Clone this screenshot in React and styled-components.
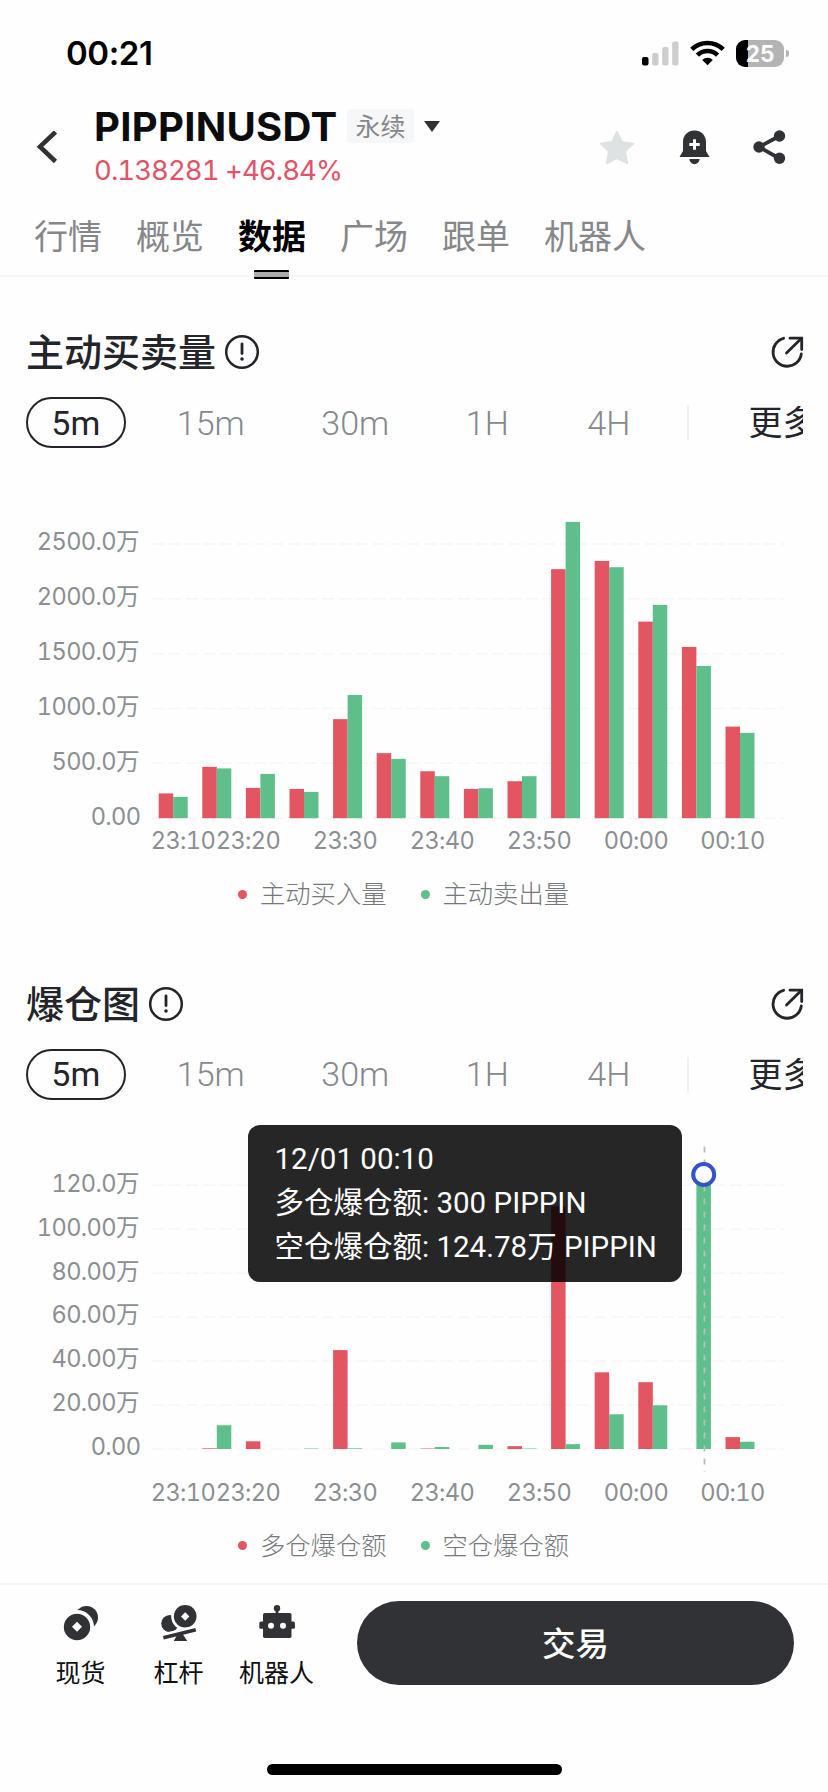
import React from 'react'
import styled, { createGlobalStyle } from 'styled-components'

const GlobalStyle = createGlobalStyle`
  * {
    box-sizing: border-box;
  }
  body {
    margin: 0;
    background: #fefefe;
    font-family: Inter, "Noto Sans CJK SC", sans-serif;
  }
`

const RED = '#e35561'
const GREEN = '#5ebf8b'
const DARK = '#303236'

const Screen = styled.div`
  display: flex;
  flex-direction: column;
  width: 828px;
  height: 1792px;
  background: #fefefe;
  overflow: hidden;
`

const StatusBar = styled.div`
  display: flex;
  justify-content: space-between;
  align-items: center;
  height: 106px;
  padding: 0 38px 0 66px;
`

const Clock = styled.span`
  font-size: 33px;
  font-weight: 600;
  letter-spacing: -0.4px;
  color: #000;
`

const StatusIcons = styled.div`
  display: flex;
  align-items: center;
  gap: 11px;
`

const Battery = styled.div`
  position: relative;
  display: flex;
  align-items: center;
  justify-content: center;
  width: 48px;
  height: 27px;
  border-radius: 9px;
  background: linear-gradient(to right, #000 12px, #b4b4b4 12px);
  color: #fff;
  font-size: 22.5px;
  font-weight: 700;
  line-height: 27px;
  margin-right: 6px;

  &:after {
    content: "";
    position: absolute;
    right: -5px;
    top: 10px;
    width: 3px;
    height: 7px;
    border-radius: 0 3px 3px 0;
    background: #b4b4b4;
  }
`

const Header = styled.header`
  display: flex;
  align-items: center;
  height: 84px;
  padding: 0 42px 0 36px;
`

const Pair = styled.div`
  flex: 1;
  margin: 0 0 3px 36px;
`

const PairTop = styled.div`
  display: flex;
  align-items: center;
  height: 42px;
`

const Symbol = styled.h1`
  margin: 0;
  width: 253px;
  font-size: 40px;
  font-weight: 700;
  line-height: 42px;
  letter-spacing: 0.3px;
  color: #0b0c0d;
`

const Tag = styled.span`
  display: flex;
  align-items: center;
  justify-content: center;
  width: 67px;
  height: 34px;
  margin: -2px 10px 0 0;
  padding-bottom: 2px;
  background: #f6f7f8;
  color: #85888c;
  font-size: 25px;
  border-radius: 3px;
`

const Price = styled.div`
  font-size: 27.5px;
  line-height: 40px;
  height: 40px;
  padding-top: 2px;
  letter-spacing: -0.95px;
  color: #df5468;
  font-feature-settings: "tnum";
  white-space: nowrap;
`

const HeaderActions = styled.div`
  display: flex;
  align-items: center;
  gap: 43.5px;
  margin-bottom: 2px;
`

const Tabs = styled.nav`
  display: flex;
  align-items: center;
  gap: 34px;
  height: 87px;
  padding: 8px 34px 0;
  border-bottom: 2px solid #f6f6f7;
`

const Tab = styled.a`
  position: relative;
  font-size: 34px;
  line-height: 48px;
  font-weight: ${(p) => (p.$active ? 700 : 400)};
  color: ${(p) => (p.$active ? '#000' : '#85878a')};

  &:after {
    content: "";
    display: ${(p) => (p.$active ? 'block' : 'none')};
    position: absolute;
    left: 16px;
    bottom: -18px;
    width: 35px;
    height: 5px;
    border-top: 2px solid #000;
    border-bottom: 2px solid #000;
    border-radius: 1px;
    background: #a9abac;
  }
`

const Section = styled.section`
  flex: none;
  height: 651.5px;
  padding-top: 50px;
`

const SectionHead = styled.div`
  display: flex;
  align-items: center;
  height: 50px;
  padding: 0 24px 0 26px;
`

const SectionTitle = styled.h2`
  margin: 0 8px 0 0;
  font-size: 38px;
  font-weight: 500;
  line-height: 50px;
  color: #23252a;
`

const Spacer = styled.div`
  flex: 1;
`

const Ranges = styled.div`
  display: flex;
  align-items: center;
  gap: 26px;
  height: 51px;
  margin: 20px 25px 0 26px;
  overflow: hidden;
  font-family: Roboto, "Noto Sans CJK SC", sans-serif;
`

const Range = styled.button`
  flex: none;
  height: 51px;
  padding: 0 23.3px;
  border: 2px solid ${(p) => (p.$active ? '#23252a' : 'transparent')};
  border-radius: 26px;
  background: none;
  font: inherit;
  font-size: 34px;
  font-weight: ${(p) => (p.$active ? 400 : 350)};
  line-height: 46px;
  color: ${(p) => (p.$active ? '#23252a' : '#85888d')};

  &:last-of-type {
    margin-left: 2px;
  }
`

const Divider = styled.span`
  flex: none;
  width: 2px;
  height: 35px;
  margin: 0 34px 0 5px;
  background: #f0f0f1;
`

const More = styled.span`
  flex: none;
  padding-top: 1px;
  font-size: 34px;
  line-height: 50px;
  color: #23252a;
`

const ChartBox = styled.div`
  position: relative;
  height: 418px;

  svg {
    display: block;
  }
`

const AxisText = styled.text`
  font-family: Inter, "Noto Sans CJK SC", sans-serif;
  font-size: 23.6px;
  font-weight: 400;
  letter-spacing: -0.6px;
  font-feature-settings: "tnum";
  fill: #8b8e93;
`

const Tooltip = styled.div`
  position: absolute;
  left: 247.5px;
  top: 25.5px;
  width: 434.5px;
  height: 157px;
  padding: 12px 27px;
  border-radius: 12px;
  background: rgba(0, 0, 0, 0.85);
  color: #fff;
  font-family: Roboto, "Noto Sans CJK SC", sans-serif;
  font-size: 29.5px;
  line-height: 44px;
  white-space: nowrap;

  div {
    height: 44px;
  }
`

const Legend = styled.div`
  display: flex;
  align-items: center;
  gap: 34px;
  height: 56px;
  padding-left: 238px;
`

const LegendItem = styled.span`
  display: flex;
  align-items: center;
  font-size: 25.3px;
  line-height: 36px;
  font-weight: 300;
  color: #75787d;

  &:before {
    content: "";
    width: 9px;
    height: 9px;
    margin-right: 13px;
    border-radius: 50%;
    background: ${(p) => p.$color};
  }
`

const BottomBar = styled.footer`
  display: flex;
  flex: none;
  height: 120px;
  margin-top: 3px;
  padding: 16px 34px 0 31.5px;
  border-top: 2px solid #f6f6f7;
`

const NavItem = styled.div`
  display: flex;
  flex-direction: column;
  align-items: center;
  width: 98px;
  font-size: 25px;
  line-height: 36px;
  color: #0f1011;
  white-space: nowrap;

  svg {
    margin: 4px 0 14px;
  }
`

const TradeButton = styled.button`
  width: 437px;
  height: 84px;
  margin-left: auto;
  padding: 0 0 3px;
  border: 0;
  border-radius: 42px;
  background: ${DARK};
  color: #fff;
  font-family: inherit;
  font-size: 33.5px;
  font-weight: 500;
`

const HomeIndicator = styled.div`
  flex: none;
  width: 295px;
  height: 11px;
  margin: 60.5px auto 0;
  border-radius: 6px;
  background: #000;
`

/* ---- icons ---- */

const SignalIcon = () => (
  <svg width="37" height="25" viewBox="0 0 37 25">
    <rect x="0" y="16" width="6.5" height="8.5" rx="2" fill="#000" />
    <rect x="10.2" y="12" width="6.3" height="12.5" rx="2" fill="#cdcdcd" />
    <rect x="20.2" y="6" width="6.3" height="18.5" rx="2" fill="#cdcdcd" />
    <rect x="30.2" y="0.5" width="6.3" height="24" rx="2" fill="#cdcdcd" />
  </svg>
)

const WifiIcon = () => (
  <svg width="35" height="26" viewBox="0 0 35 26">
    <g fill="none" stroke="#000" strokeWidth="4.6">
      <path d="M1.8 9.4a22.4 22.4 0 0 1 31.4 0" />
      <path d="M7.4 15.1a14.4 14.4 0 0 1 20.2 0" />
    </g>
    <path d="M17.5 25.2l-5.3-5.2a7.5 7.5 0 0 1 10.6 0z" fill="#000" />
  </svg>
)

const BackIcon = () => (
  <svg width="22" height="34" viewBox="0 0 22 34">
    <path d="M19.5 1L4 15.7l15.5 14.8" fill="none" stroke={DARK} strokeWidth="4.6" />
  </svg>
)

const StarIcon = () => (
  <svg width="36" height="35" viewBox="0 0 36 35">
    <path
      d="M18 1.5l5 10.4 11.6 1.6-8.4 8 2.2 12L18 28.4 7.6 33.5l2.2-12-8.4-8L13 11.9z"
      fill="#dfe2e3"
      stroke="#dfe2e3"
      strokeWidth="1.6"
      strokeLinejoin="round"
    />
  </svg>
)

const BellIcon = () => (
  <svg width="31" height="35" viewBox="0 0 31 35">
    <path d="M15.5 0.5C22.3 0.5 27 5.4 27 12v9l3.5 6H0.5L4 21v-9C4 5.4 8.7 0.5 15.5 0.5z" fill={DARK} />
    <path d="M15.5 9.3v10.4M10.3 14.5h10.4" stroke="#fff" strokeWidth="3" />
    <path d="M10.3 29h10.4c-.5 3.3-2.5 5.2-5.2 5.2s-4.7-1.9-5.2-5.2z" fill={DARK} />
  </svg>
)

const ShareIcon = () => (
  <svg width="33" height="35" viewBox="0 0 33 35">
    <path d="M26.5 6L6 17l20.5 11.5" fill="none" stroke={DARK} strokeWidth="3.8" />
    <circle cx="26.5" cy="6" r="5.7" fill={DARK} />
    <circle cx="6" cy="17" r="5.7" fill={DARK} />
    <circle cx="26.5" cy="28.3" r="5.7" fill={DARK} />
  </svg>
)

const InfoIcon = () => (
  <svg width="36" height="36" viewBox="0 0 36 36">
    <circle cx="18" cy="18" r="15.8" fill="none" stroke="#23252a" strokeWidth="2.5" />
    <path d="M18 10v9.5" stroke="#23252a" strokeWidth="2.8" strokeLinecap="round" />
    <circle cx="18" cy="25" r="1.8" fill="#23252a" />
  </svg>
)

const ExpandIcon = () => (
  <svg width="34" height="34" viewBox="0 0 34 34" fill="none" stroke="#23252a" strokeWidth="2.8" strokeLinecap="round">
    <path d="M13.6 3.3A14.2 14.2 0 1 0 31.3 19" />
    <path d="M16.5 18L31 3.8" />
    <path d="M20 3.2h11.7v11.3" />
  </svg>
)

const SpotIcon = () => (
  <svg width="36" height="36" viewBox="0 0 36 36">
    <circle cx="23.5" cy="12.5" r="11.5" fill={DARK} />
    <circle cx="14" cy="22" r="17" fill="#fefefe" />
    <circle cx="14" cy="22" r="13.2" fill={DARK} />
    <path d="M14 16.8l5 5-5 5-5-5z" fill="#fff" />
  </svg>
)

const MarginIcon = () => (
  <svg width="36" height="36" viewBox="0 0 36 36">
    <circle cx="8.8" cy="18.5" r="8.6" fill={DARK} />
    <circle cx="24.2" cy="11.3" r="14" fill="#fefefe" />
    <circle cx="24.2" cy="11.3" r="11.3" fill={DARK} />
    <path d="M24.2 7.3l4.2 4.2-4.2 4.2-4.2-4.2z" fill="#fff" />
    <path d="M2 31.3L35 23.3" stroke="#fefefe" strokeWidth="6" />
    <path d="M2.4 32.8L34.8 24.8" stroke={DARK} strokeWidth="3.6" />
    <path d="M16.8 28.5h4.5l5 7.5H12.8z" fill={DARK} />
  </svg>
)

const RobotIcon = () => (
  <svg width="36" height="36" viewBox="0 0 36 36">
    <circle cx="18" cy="3.3" r="3.2" fill={DARK} />
    <rect x="16.6" y="4" width="2.8" height="6" fill={DARK} />
    <rect x="4" y="8" width="28.5" height="25" rx="1.8" fill={DARK} />
    <rect x="0.3" y="16.5" width="35.6" height="7.2" rx="1.5" fill={DARK} />
    <circle cx="12" cy="20.8" r="3" fill="#fff" />
    <circle cx="24" cy="20.8" r="3" fill="#fff" />
  </svg>
)

/* ---- data, in 万 ---- */

const volumeData = [
  [226, 194], [468, 454], [276, 404], [267, 240], [903, 1123], [593, 541], [428, 383],
  [267, 273], [337, 383], [2270, 2701], [2345, 2288], [1792, 1944], [1561, 1388], [835, 778],
]

const liquidationData = [
  [0, 0], [0.3, 10.8], [3.5, 0], [0, 0.2], [45, 0.3], [0, 3], [0.2, 0.9],
  [0, 1.9], [1.3, 0.2], [110.4, 2.2], [34.9, 15.8], [30.4, 19.9], [0.03, 124.78], [5.4, 3.3],
]

const xTicks = [
  [183, '23:10'], [248, '23:20'], [345, '23:30'], [442, '23:40'],
  [539, '23:50'], [636, '00:00'], [732.5, '00:10'],
]

const ranges = ['5m', '15m', '30m', '1H', '4H']

const BarChart = ({ data, ticks, base, step, unit, cursor }) => (
  <svg width="828" height="418" viewBox="0 0 828 418">
    {ticks.map((t, i) => (
      <g key={t}>
        <path d={`M152 ${base - i * step}H784`} stroke="#f5f6f7" strokeWidth="1.5" strokeDasharray="12 5" />
        <AxisText x={i ? 139 : 140.5} y={base - i * step + 6.3} textAnchor="end">{t}</AxisText>
      </g>
    ))}
    {data.map(([a, b], i) => {
      const x = 158.7 + i * 43.6
      const scale = step / unit
      return (
        <g key={i}>
          <rect x={x} y={base - a * scale} width="14.5" height={a * scale} fill={RED} />
          <rect x={x + 14.5} y={base - b * scale} width="14.5" height={b * scale} fill={GREEN} />
        </g>
      )
    })}
    {xTicks.map(([x, label]) => (
      <AxisText key={label} x={x} y="401.3" textAnchor="middle">{label}</AxisText>
    ))}
    {cursor && (
      <g>
        <path d="M704.5 46.5V372" stroke="#b9bdbb" strokeWidth="1.8" strokeDasharray="6 7" />
        <circle cx="703.7" cy="74.5" r="10.5" fill="#fff" stroke="#3552c9" strokeWidth="4" />
      </g>
    )}
  </svg>
)

const ChartSection = ({ title, legend, chart, children }) => (
  <Section>
    <SectionHead>
      <SectionTitle>{title}</SectionTitle>
      <InfoIcon />
      <Spacer />
      <ExpandIcon />
    </SectionHead>
    <Ranges>
      {ranges.map((r, i) => (
        <Range key={r} $active={i === 0}>{r}</Range>
      ))}
      <Divider />
      <More>更多</More>
    </Ranges>
    <ChartBox>
      <BarChart {...chart} />
      {children}
    </ChartBox>
    <Legend>
      <LegendItem $color={RED}>{legend[0]}</LegendItem>
      <LegendItem $color={GREEN}>{legend[1]}</LegendItem>
    </Legend>
  </Section>
)

const App = () => {
  return (
    <Screen>
      <GlobalStyle />
      <StatusBar>
        <Clock>00:21</Clock>
        <StatusIcons>
          <SignalIcon />
          <WifiIcon />
          <Battery>25</Battery>
        </StatusIcons>
      </StatusBar>

      <Header>
        <BackIcon />
        <Pair>
          <PairTop>
            <Symbol>PIPPINUSDT</Symbol>
            <Tag>永续</Tag>
            <svg width="16" height="11" viewBox="0 0 16 11">
              <path d="M0 0h16L8 11z" fill={DARK} />
            </svg>
          </PairTop>
          <Price>0.138281 +46.84%</Price>
        </Pair>
        <HeaderActions>
          <StarIcon />
          <BellIcon />
          <ShareIcon />
        </HeaderActions>
      </Header>

      <Tabs>
        <Tab>行情</Tab>
        <Tab>概览</Tab>
        <Tab $active>数据</Tab>
        <Tab>广场</Tab>
        <Tab>跟单</Tab>
        <Tab>机器人</Tab>
      </Tabs>

      <ChartSection
        title="主动买卖量"
        legend={['主动买入量', '主动卖出量']}
        chart={{
          data: volumeData,
          ticks: ['0.00', '500.0万', '1000.0万', '1500.0万', '2000.0万', '2500.0万'],
          base: 370.2,
          step: 54.85,
          unit: 500,
        }}
      />

      <ChartSection
        title="爆仓图"
        legend={['多仓爆仓额', '空仓爆仓额']}
        chart={{
          data: liquidationData,
          ticks: ['0.00', '20.00万', '40.00万', '60.00万', '80.00万', '100.00万', '120.0万'],
          base: 349,
          step: 43.95,
          unit: 20,
          cursor: true,
        }}
      >
        <Tooltip>
          <div>12/01 00:10</div>
          <div>多仓爆仓额: 300 PIPPIN</div>
          <div>空仓爆仓额: 124.78万 PIPPIN</div>
        </Tooltip>
      </ChartSection>

      <BottomBar>
        <NavItem><SpotIcon />现货</NavItem>
        <NavItem><MarginIcon />杠杆</NavItem>
        <NavItem><RobotIcon />机器人</NavItem>
        <TradeButton>交易</TradeButton>
      </BottomBar>
      <HomeIndicator />
    </Screen>
  )
}

export default App
